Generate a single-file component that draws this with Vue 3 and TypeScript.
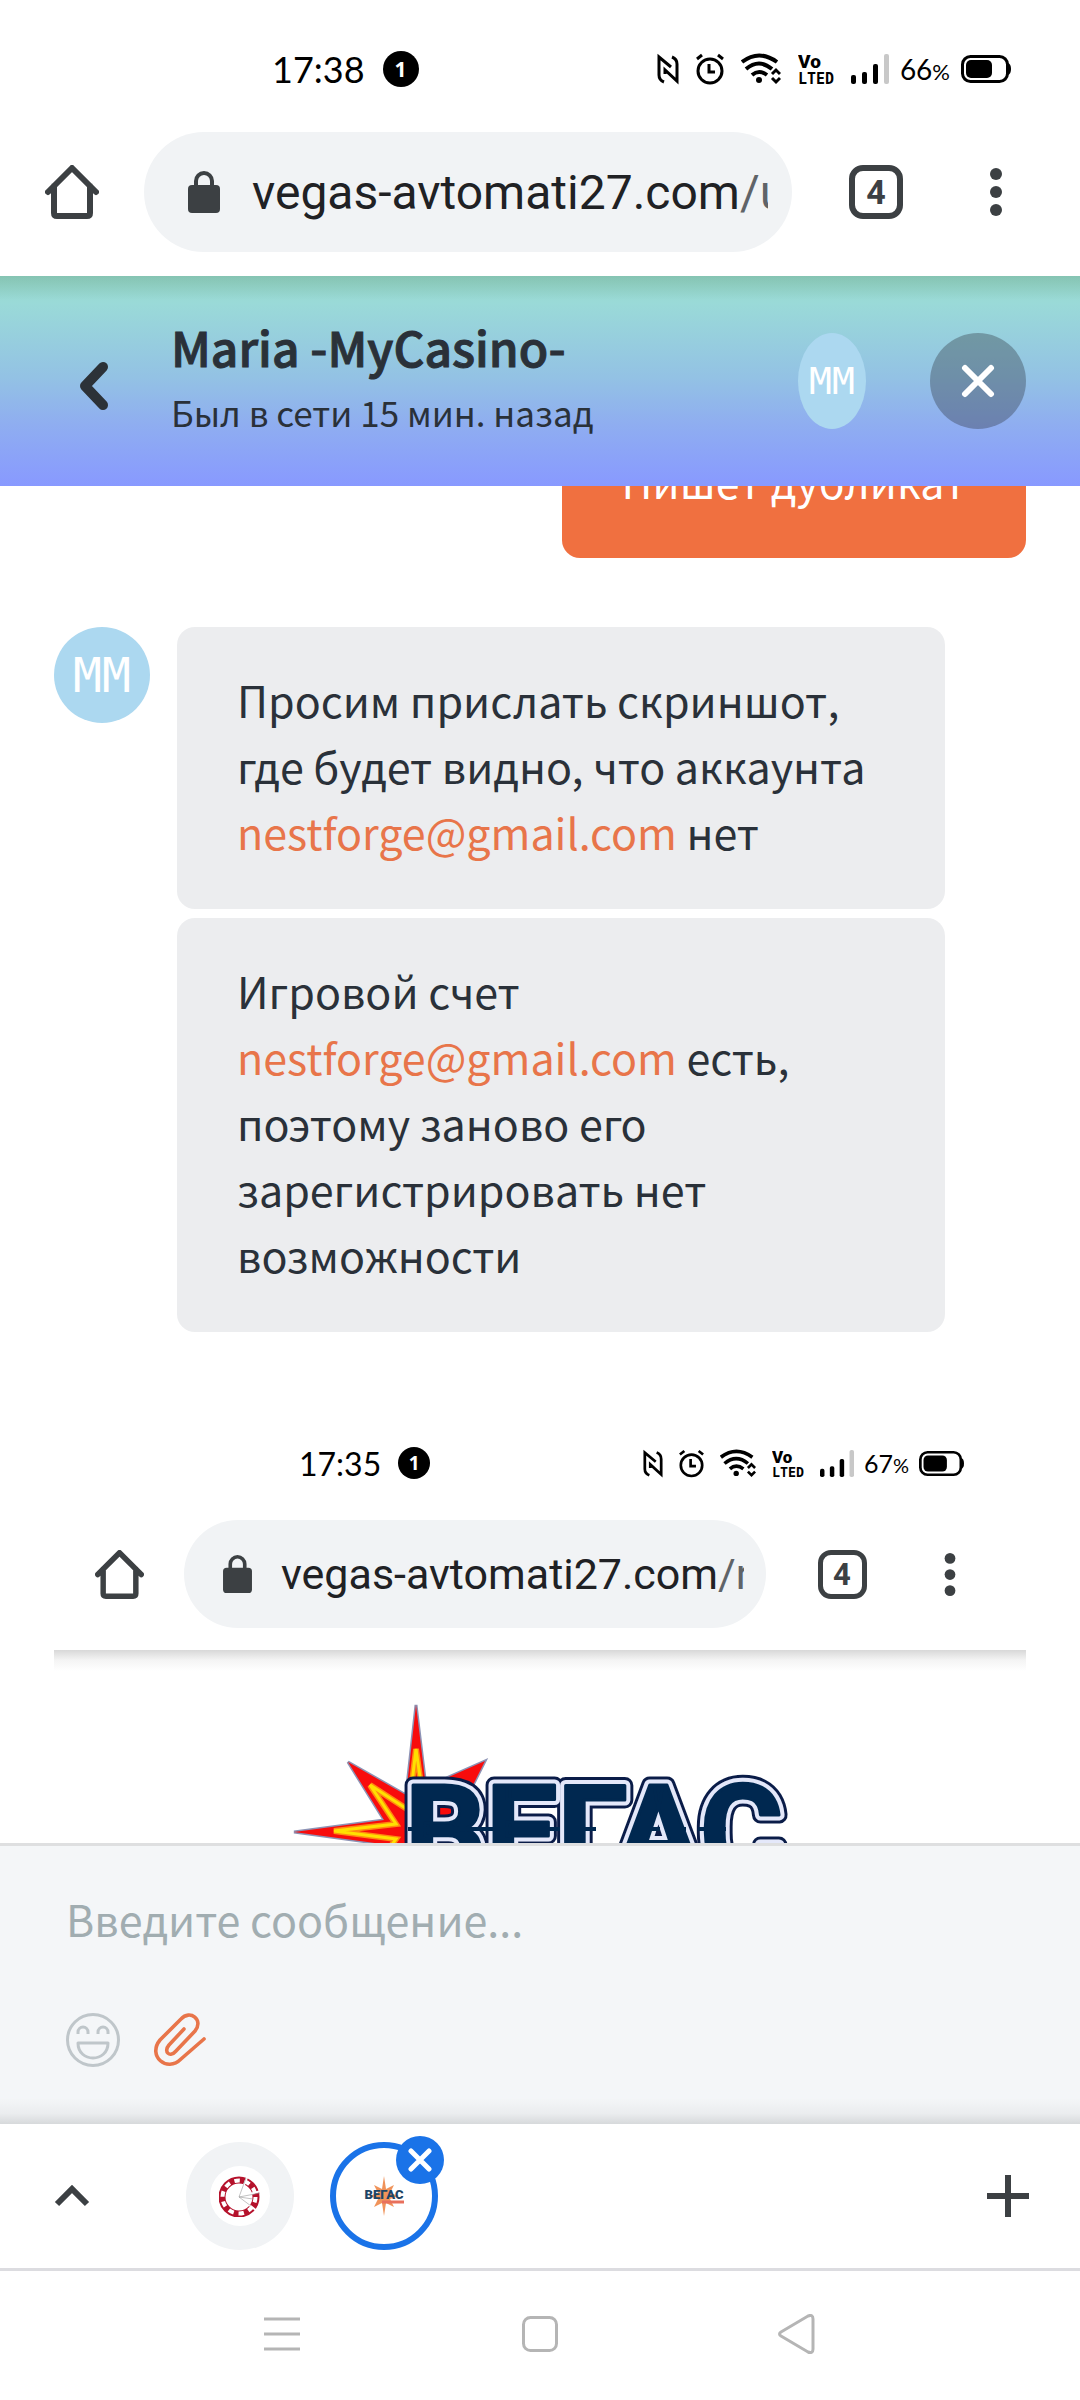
<script setup lang="ts">
import { ref } from 'vue'

interface Part {
  text: string
  mail?: boolean
}

const draft = ref('')
const outgoing = 'Пишет дубликат'
const mail = 'nestforge@gmail.com'

const incoming: Part[][] = [
  [
    { text: 'Просим прислать скриншот, где будет видно, что аккаунта ' },
    { text: mail, mail: true },
    { text: ' нет' },
  ],
  [
    { text: 'Игровой счет ' },
    { text: mail, mail: true },
    { text: ' есть, поэтому заново его зарегистрировать нет возможности' },
  ],
]
</script>

<template>
  <svg class="sprite" aria-hidden="true">
    <symbol id="i-nfc" viewBox="0 0 22 30">
      <path d="M7 28 Q2 26 2 21 V3 L14 13 M15 3 Q20 5 20 10 V27 L8 16 V20" fill="none" stroke="#000" stroke-width="3" />
    </symbol>
    <symbol id="i-alarm" viewBox="0 0 28 32">
      <circle cx="14" cy="18" r="12" fill="none" stroke="#000" stroke-width="3" />
      <path d="M13 11 V19 H19 M1 6 L6 2 M27 6 L22 2" fill="none" stroke="#000" stroke-width="3" />
    </symbol>
    <symbol id="i-wifi" viewBox="0 0 40 32">
      <path d="M1 9 Q18 -4 36 9 M5 16 Q18 5 31 16 M11 22 Q18 16 26 22" fill="none" stroke="#000" stroke-width="4" />
      <circle cx="18" cy="27" r="3" />
      <path d="M31 21 L35 17 L39 21 M31 25 L35 29 L39 25" fill="none" stroke="#000" stroke-width="3" />
    </symbol>
    <symbol id="i-signal" viewBox="0 0 38 32">
      <rect x="0" y="22" width="5" height="9" rx="2" />
      <rect x="11" y="19" width="5" height="12" rx="2" />
      <rect x="22" y="11" width="5" height="20" rx="2" />
      <rect x="33" y="1" width="5" height="30" rx="2" fill="#c8c8c8" />
    </symbol>
    <symbol id="i-battery" viewBox="0 0 50 30">
      <rect x="1.5" y="2.5" width="45" height="25" rx="8" fill="none" stroke="#000" stroke-width="3" />
      <rect x="5" y="6" width="26" height="18" rx="5" />
      <path d="M47 9 Q50 10 50 15 T47 21 Z" />
    </symbol>
    <symbol id="i-home" viewBox="0 0 54 54">
      <path d="M3 27 L27 3 L51 27 M9 21 V48 Q9 51 12 51 H42 Q45 51 45 48 V21" fill="none" stroke="#3c4043" stroke-width="6" stroke-linecap="round" stroke-linejoin="round" />
    </symbol>
    <symbol id="i-lock" viewBox="0 0 32 42">
      <rect x="0" y="14" width="32" height="28" rx="4" fill="#3c4043" />
      <path d="M8 15 V10 A8 8 0 0 1 24 10 V15" fill="none" stroke="#3c4043" stroke-width="4" />
    </symbol>
    <symbol id="i-dots" viewBox="0 0 12 48">
      <g fill="#3c4043">
        <circle cx="6" cy="6" r="6" />
        <circle cx="6" cy="24" r="6" />
        <circle cx="6" cy="42" r="6" />
      </g>
    </symbol>
  </svg>

  <div class="phone">
    <div class="status">
      <time class="clock">17:38</time>
      <span class="badge">1</span>
      <div class="signals">
        <svg class="ic-nfc"><use href="#i-nfc" /></svg>
        <svg class="ic-alarm"><use href="#i-alarm" /></svg>
        <svg class="ic-wifi"><use href="#i-wifi" /></svg>
        <svg class="ic-volte" viewBox="0 0 36 32">
          <text x="0" y="15" class="volte-top">Vo</text>
          <text x="0" y="31" class="volte-low">LTED</text>
        </svg>
        <svg class="ic-signal"><use href="#i-signal" /></svg>
      </div>
      <span class="charge">66<small>%</small></span>
      <svg class="ic-battery"><use href="#i-battery" /></svg>
    </div>
    <nav class="toolbar">
      <button class="home" aria-label="Home"><svg><use href="#i-home" /></svg></button>
      <button class="address">
        <svg><use href="#i-lock" /></svg>
        <span class="url">vegas-avtomati27.com<i>/u</i></span>
      </button>
      <button class="tool tabs"><span>4</span></button>
      <button class="tool" aria-label="Menu"><svg class="ic-dots"><use href="#i-dots" /></svg></button>
    </nav>

    <header class="chat-head">
      <button class="back" aria-label="Назад">
        <svg viewBox="0 0 28 48"><path d="M23 5 L5 24 L23 43" /></svg>
      </button>
      <div class="who">
        <h1>Maria -MyCasino-</h1>
        <p>Был в сети 15 мин. назад</p>
      </div>
      <span class="avatar narrow">MM</span>
      <button class="close" aria-label="Закрыть">
        <svg viewBox="0 0 34 34"><path d="M4 4 L30 30 M30 4 L4 30" /></svg>
      </button>
    </header>

    <main class="chat">
      <p class="bubble mine">{{ outgoing }}</p>
      <div class="row">
        <span class="avatar">MM</span>
        <div class="stack">
          <p v-for="(parts, i) in incoming" :key="i" class="bubble">
            <template v-for="(p, j) in parts" :key="j">
              <a v-if="p.mail" :href="'mailto:' + p.text">{{ p.text }}</a>
              <template v-else>{{ p.text }}</template>
            </template>
          </p>
        </div>
      </div>

      <figure class="shot mini">
        <div class="status">
          <time class="clock">17:35</time>
          <span class="badge">1</span>
          <div class="signals">
            <svg class="ic-nfc"><use href="#i-nfc" /></svg>
            <svg class="ic-alarm"><use href="#i-alarm" /></svg>
            <svg class="ic-wifi"><use href="#i-wifi" /></svg>
            <svg class="ic-volte" viewBox="0 0 36 32">
              <text x="0" y="15" class="volte-top">Vo</text>
              <text x="0" y="31" class="volte-low">LTED</text>
            </svg>
            <svg class="ic-signal"><use href="#i-signal" /></svg>
          </div>
          <span class="charge">67<small>%</small></span>
          <svg class="ic-battery"><use href="#i-battery" /></svg>
        </div>
        <div class="toolbar">
          <span class="home"><svg><use href="#i-home" /></svg></span>
          <span class="address">
            <svg><use href="#i-lock" /></svg>
            <span class="url">vegas-avtomati27.com<i>/r</i></span>
          </span>
          <span class="tool tabs"><span>4</span></span>
          <span class="tool"><svg class="ic-dots"><use href="#i-dots" /></svg></span>
        </div>
        <div class="shot-page">
          <svg class="logo" viewBox="0 0 560 240">
            <path class="star-shadow" d="M156 24 L166 106 L225 80 L190 150 L160 230 L148 185 L88 210 L122 163 L34 151 L124 139 L88 81 L146 114 Z" />
            <path fill="#f80c0c" d="M156 24 L166 106 L225 80 L190 150 L160 230 L148 185 L88 210 L122 163 L34 151 L124 139 L88 81 L146 114 Z" />
            <path class="flame" d="M151 110 L156 68 L162 110 M150 130 L110 104 L136 143 L74 150 L136 158 L112 192" />
            <path class="flame-core" d="M151 110 L156 68 L162 110 M150 130 L110 104 L136 143 L74 150 L136 158 L112 192" />
            <g class="l1"><text id="brand" x="145" y="194">ВЕГАС</text></g>
            <use class="l2" href="#brand" />
            <use class="l3" href="#brand" />
            <path d="M148 148 H300 M306 148 H336 M384 148 H400 M410 148 H426 M438 148 H466" stroke="#002850" stroke-width="4" />
          </svg>
        </div>
      </figure>
    </main>

    <form class="composer" @submit.prevent>
      <input v-model="draft" type="text" aria-label="Сообщение" placeholder="Введите сообщение..." />
      <div class="actions">
        <button type="button" aria-label="Эмодзи">
          <svg viewBox="0 0 54 54" fill="none" stroke="#bfc6ca" stroke-width="3">
            <circle cx="27" cy="27" r="25.5" />
            <path d="M12 21 V19 A5 5 0 0 1 22 19 V21 M32 21 V19 A5 5 0 0 1 42 19 V21 M12 30 H42 C42 50 12 50 12 30 Z" stroke-linejoin="round" />
          </svg>
        </button>
        <button type="button" aria-label="Файл">
          <svg viewBox="0 0 54 54" fill="none" stroke="#e8754a" stroke-width="3.6" stroke-linecap="round">
            <path d="M31 16 L16 32 C10 39 17 45 23 38 L42 18 C51 7 37 -4 28 6 L7 27 C-6 43 14 60 28 46 L51 26" />
          </svg>
        </button>
      </div>
    </form>

    <div class="strip">
      <button class="up" aria-label="Развернуть">
        <svg viewBox="0 0 36 24"><path d="M3 20 L18 5 L33 20" fill="none" stroke="#3c4043" stroke-width="6" /></svg>
      </button>
      <button class="tab" aria-label="Казино">
        <span class="disc">
          <svg viewBox="0 0 42 42">
            <circle cx="20" cy="22" r="17" fill="none" stroke="#b5122c" stroke-width="7" />
            <circle cx="20" cy="22" r="16.5" fill="none" stroke="#fff" stroke-width="4" stroke-dasharray="5.5 4.87" />
            <path d="M20 22 L29 0 M20 22 L42 16 M20 22 L38 36" stroke="#fff" stroke-width="2" />
            <path d="M20 22 L27 3 M20 22 L41 18 M20 22 L34 24 M20 22 L32 31" stroke="#999" stroke-width="0.6" />
          </svg>
        </span>
      </button>
      <button class="tab active" aria-label="Вегас">
        <svg class="fav" viewBox="0 0 42 42">
          <path d="M21 1 L23 14 L31 10 L27 18 L36 21 L27 24 L31 32 L23 28 L21 41 L19 28 L11 32 L15 24 L6 21 L15 18 L11 10 L19 14 Z" fill="#f0935a" />
          <path d="M19 27 H41" stroke="#e8705c" stroke-width="3" />
          <text x="21" y="24" text-anchor="middle">ВЕГАС</text>
        </svg>
        <span class="dismiss">
          <svg viewBox="0 0 24 24"><path d="M3 3 L21 21 M21 3 L3 21" /></svg>
        </span>
      </button>
      <button class="add" aria-label="Новая вкладка">
        <svg viewBox="0 0 42 42"><path d="M21 0 V42 M0 21 H42" stroke="#3c4043" stroke-width="6" /></svg>
      </button>
    </div>

    <nav class="system">
      <button aria-label="Недавние">
        <svg viewBox="0 0 40 40"><path d="M2 5 H38 M2 20 H38 M2 35 H38" /></svg>
      </button>
      <button aria-label="Домой">
        <svg viewBox="0 0 40 40"><rect x="3.5" y="3.5" width="33" height="33" rx="7" /></svg>
      </button>
      <button aria-label="Назад">
        <svg viewBox="0 0 40 40"><path d="M3 18 L30 2 Q35 0 35 5 V35 Q35 40 30 38 L3 22 Q0 20 3 18 Z" /></svg>
      </button>
    </nav>
  </div>
</template>

<style>
body {
  background: #fff;
}
</style>

<style scoped>
* {
  box-sizing: border-box;
}
.sprite {
  position: absolute;
  width: 0;
  height: 0;
}
svg {
  display: block;
  flex: none;
}
button {
  border: 0;
  padding: 0;
  background: none;
  font: inherit;
  color: inherit;
  cursor: pointer;
}
h1,
p,
figure {
  margin: 0;
}
.volte-top {
  font: 900 19px Roboto, sans-serif;
}
.volte-low {
  font: bold 15px "DejaVu Sans Mono", monospace;
}

.phone {
  --status-h: 132px;
  --status-drop: 6px;
  --clock-x: 272px;
  --clock: 36px;
  --badge-gap: 18px;
  --badge: 36px;
  --badge-text: 21px;
  --right: 69px;
  --gap: 17px;
  --gap-s: 11px;
  --pct: 28px;
  --pct-s: 22px;
  --ih: 32px;
  --nfc: 22px;
  --alarm: 28px;
  --wifi: 40px;
  --volte: 36px;
  --signal: 38px;
  --battery: 50px;
  --home: 144px;
  --icon: 54px;
  --pill: 120px;
  --pill-x: 44px;
  --lock-w: 32px;
  --lock-h: 42px;
  --lock-gap: 32px;
  --edge: 24px;
  --url: 48px;
  --tool: 120px;
  --line: 6px;
  --round: 14px;
  --count: 34px;
  --dots: 48px;
  display: flex;
  flex-direction: column;
  height: 100vh;
  overflow: hidden;
  background: #fff;
  color: #2a3139;
  font-family: "Noto Sans CJK SC", "Noto Sans", sans-serif;
}
.mini {
  --status-h: 119px;
  --status-drop: 5px;
  --clock-x: 245px;
  --clock: 32px;
  --badge-gap: 17px;
  --badge: 32px;
  --badge-text: 19px;
  --right: 62px;
  --gap: 16px;
  --gap-s: 10px;
  --pct: 25px;
  --pct-s: 20px;
  --ih: 29px;
  --nfc: 20px;
  --alarm: 25px;
  --wifi: 36px;
  --volte: 32px;
  --signal: 34px;
  --battery: 45px;
  --home: 130px;
  --icon: 49px;
  --pill: 108px;
  --pill-x: 39px;
  --lock-w: 29px;
  --lock-h: 38px;
  --lock-gap: 29px;
  --edge: 22px;
  --url: 43px;
  --tool: 108px;
  --line: 5px;
  --round: 13px;
  --count: 31px;
  --dots: 43px;
}

.status {
  flex: none;
  display: flex;
  align-items: center;
  height: var(--status-h);
  padding: var(--status-drop) var(--right) 0 var(--clock-x);
  color: #000;
  font-family: Lato, sans-serif;
}
.clock {
  font-size: var(--clock);
}
.badge {
  display: flex;
  align-items: center;
  justify-content: center;
  width: var(--badge);
  height: var(--badge);
  margin-left: var(--badge-gap);
  border-radius: 50%;
  background: #000;
  color: #fff;
  font: bold var(--badge-text) "Noto Sans", sans-serif;
}
.signals {
  display: flex;
  gap: var(--gap);
  margin-left: auto;
}
.signals svg {
  height: var(--ih);
}
.ic-nfc {
  width: var(--nfc);
}
.ic-alarm {
  width: var(--alarm);
}
.ic-wifi {
  width: var(--wifi);
}
.ic-volte {
  width: var(--volte);
}
.ic-signal {
  width: var(--signal);
}
.ic-battery {
  width: var(--battery);
  height: var(--ih);
}
.charge {
  margin: 0 var(--gap-s);
  font-size: var(--pct);
}
.charge small {
  font-size: var(--pct-s);
}
.toolbar {
  flex: none;
  display: flex;
  align-items: center;
  padding: 0 var(--edge) var(--edge) 0;
}
.home {
  display: flex;
  justify-content: center;
  width: var(--home);
}
.home svg {
  width: var(--icon);
  height: var(--icon);
}
.address {
  flex: 1;
  min-width: 0;
  display: flex;
  align-items: center;
  gap: var(--lock-gap);
  height: var(--pill);
  margin-right: var(--edge);
  padding: 0 var(--edge) 0 var(--pill-x);
  border-radius: 60px;
  background: #f1f3f5;
}
.address svg {
  width: var(--lock-w);
  height: var(--lock-h);
}
.url {
  flex: 1;
  min-width: 0;
  overflow: hidden;
  white-space: nowrap;
  text-align: left;
  color: #202124;
  font-family: Roboto, sans-serif;
  font-size: var(--url);
}
.url i {
  font-style: normal;
  color: #5f6368;
}
.tool {
  display: flex;
  align-items: center;
  justify-content: center;
  width: var(--tool);
}
.tabs span {
  display: flex;
  align-items: center;
  justify-content: center;
  width: var(--icon);
  height: var(--icon);
  border: var(--line) solid #3c4043;
  border-radius: var(--round);
  color: #3c4043;
  font-family: Roboto, sans-serif;
  font-size: var(--count);
  font-weight: bold;
}
.ic-dots {
  width: 12px;
  height: var(--dots);
}

.chat-head {
  flex: none;
  display: flex;
  align-items: center;
  height: 210px;
  padding-right: 54px;
  background:
    linear-gradient(rgba(20, 60, 40, 0.14), rgba(20, 60, 40, 0)) top / 100% 24px no-repeat,
    linear-gradient(#98dac9 0%, #9adad8 13%, #93c2e4 48%, #8faef0 70%, #8899ff 100%);
}
.back {
  width: 171px;
  padding: 10px 0 0 80px;
}
.back svg {
  width: 28px;
  height: 48px;
  fill: none;
  stroke: #2c3238;
  stroke-width: 10;
  stroke-linecap: round;
  stroke-linejoin: round;
}
.who {
  flex: 1;
  padding-bottom: 10px;
}
.who h1 {
  font-size: 48px;
  line-height: 72px;
  font-weight: 500;
  -webkit-text-stroke: 1px currentColor;
}
.who p {
  font-size: 35px;
  line-height: 60px;
}
.avatar {
  flex: none;
  display: flex;
  align-items: center;
  justify-content: center;
  width: 96px;
  height: 96px;
  border-radius: 50%;
  background: #acd8f0;
  color: #fff;
  font: 48px "DejaVu Sans Mono", monospace;
}
.avatar.narrow {
  width: 68px;
  font-size: 38px;
}
.close {
  display: flex;
  align-items: center;
  justify-content: center;
  width: 96px;
  height: 96px;
  margin-left: 64px;
  border-radius: 50%;
  background: rgba(42, 49, 57, 0.35);
}
.close svg {
  width: 34px;
  height: 34px;
  fill: none;
  stroke: #fff;
  stroke-width: 6;
  stroke-linecap: round;
}

.chat {
  flex: 1;
  min-height: 0;
  display: flex;
  flex-direction: column;
  gap: 69px;
  padding: 0 54px;
  overflow: hidden;
}
.bubble {
  padding: 39px 60px 45px;
  border-radius: 18px;
  background: #ecedef;
  font-size: 43px;
  line-height: 66px;
}
.bubble a {
  color: #e8754a;
  text-decoration: none;
}
/* the thread is scrolled: the upper part of this bubble is under the header */
.bubble.mine {
  align-self: flex-end;
  margin-top: -78px;
  background: #f07040;
  color: #fff;
}
.row {
  display: flex;
  align-items: flex-start;
  gap: 27px;
  padding-right: 81px;
}
.stack {
  flex: 1;
  display: flex;
  flex-direction: column;
  gap: 9px;
}
.shot {
  flex: none;
}
.shot-page {
  display: flex;
  justify-content: center;
  padding-top: 31px;
  background: linear-gradient(#d8d8d8, #f4f4f4 10px, #fff 21px);
}
.logo {
  width: 560px;
  height: 240px;
}
.star-shadow {
  fill: none;
  stroke: #8d93b5;
  stroke-width: 3;
}
.flame {
  fill: none;
  stroke: #ff8a10;
  stroke-width: 6;
}
.flame-core {
  fill: none;
  stroke: #ffe000;
  stroke-width: 3;
}
.logo text {
  font: bold 127px Roboto, sans-serif;
  stroke-linejoin: round;
}
.l1 {
  fill: #002850;
  stroke: #0a1c48;
  stroke-width: 17;
}
.l2 {
  fill: #e4e8fa;
  stroke: #e4e8fa;
  stroke-width: 11;
}
.l3 {
  fill: #002850;
  stroke: #002850;
  stroke-width: 3;
}

.composer {
  flex: none;
  padding: 39px 66px 57px;
  border-top: 3px solid #dedfe0;
  background: linear-gradient(rgba(60, 64, 67, 0), rgba(60, 64, 67, 0.05) 60%, rgba(60, 64, 67, 0.16)) bottom / 100% 26px no-repeat #f4f6f8;
}
.composer input {
  display: block;
  width: 100%;
  height: 66px;
  padding: 0;
  border: 0;
  outline: 0;
  background: none;
  color: #2a3139;
  font: 43px "Noto Sans CJK SC", "Noto Sans", sans-serif;
}
.composer input::placeholder {
  color: #a1adb1;
  opacity: 1;
}
.actions {
  display: flex;
  gap: 33px;
  margin-top: 62px;
}
.actions svg {
  width: 54px;
  height: 54px;
}

.strip {
  flex: none;
  display: flex;
  align-items: center;
  height: 147px;
  padding: 0 51px 0 54px;
  border-bottom: 3px solid #dcdce0;
}
.up {
  margin-right: 96px;
}
.up svg {
  width: 36px;
  height: 24px;
}
.tab {
  position: relative;
  display: flex;
  align-items: center;
  justify-content: center;
  width: 108px;
  height: 108px;
  margin-right: 36px;
  border-radius: 50%;
  background: #f1f3f5;
}
.tab.active {
  border: 6px solid #1a73e8;
  background: #fff;
}
.disc {
  display: flex;
  align-items: center;
  justify-content: center;
  width: 60px;
  height: 60px;
  border-radius: 50%;
  background: #fff;
}
.disc svg,
.fav,
.add svg {
  width: 42px;
  height: 42px;
}
.fav text {
  font: 900 13px Roboto, sans-serif;
  fill: #1d4566;
}
.dismiss {
  position: absolute;
  top: -12px;
  right: -12px;
  display: flex;
  align-items: center;
  justify-content: center;
  width: 48px;
  height: 48px;
  border-radius: 50%;
  background: #1a73e8;
}
.dismiss svg {
  width: 24px;
  height: 24px;
  stroke: #fff;
  stroke-width: 5;
  stroke-linecap: round;
}
.add {
  margin-left: auto;
}
.system {
  flex: none;
  display: flex;
  align-items: center;
  justify-content: space-between;
  height: 129px;
  padding: 0 262px 3px;
}
.system svg {
  width: 40px;
  height: 40px;
  fill: none;
  stroke: #b5b5b5;
  stroke-width: 3;
}
</style>
